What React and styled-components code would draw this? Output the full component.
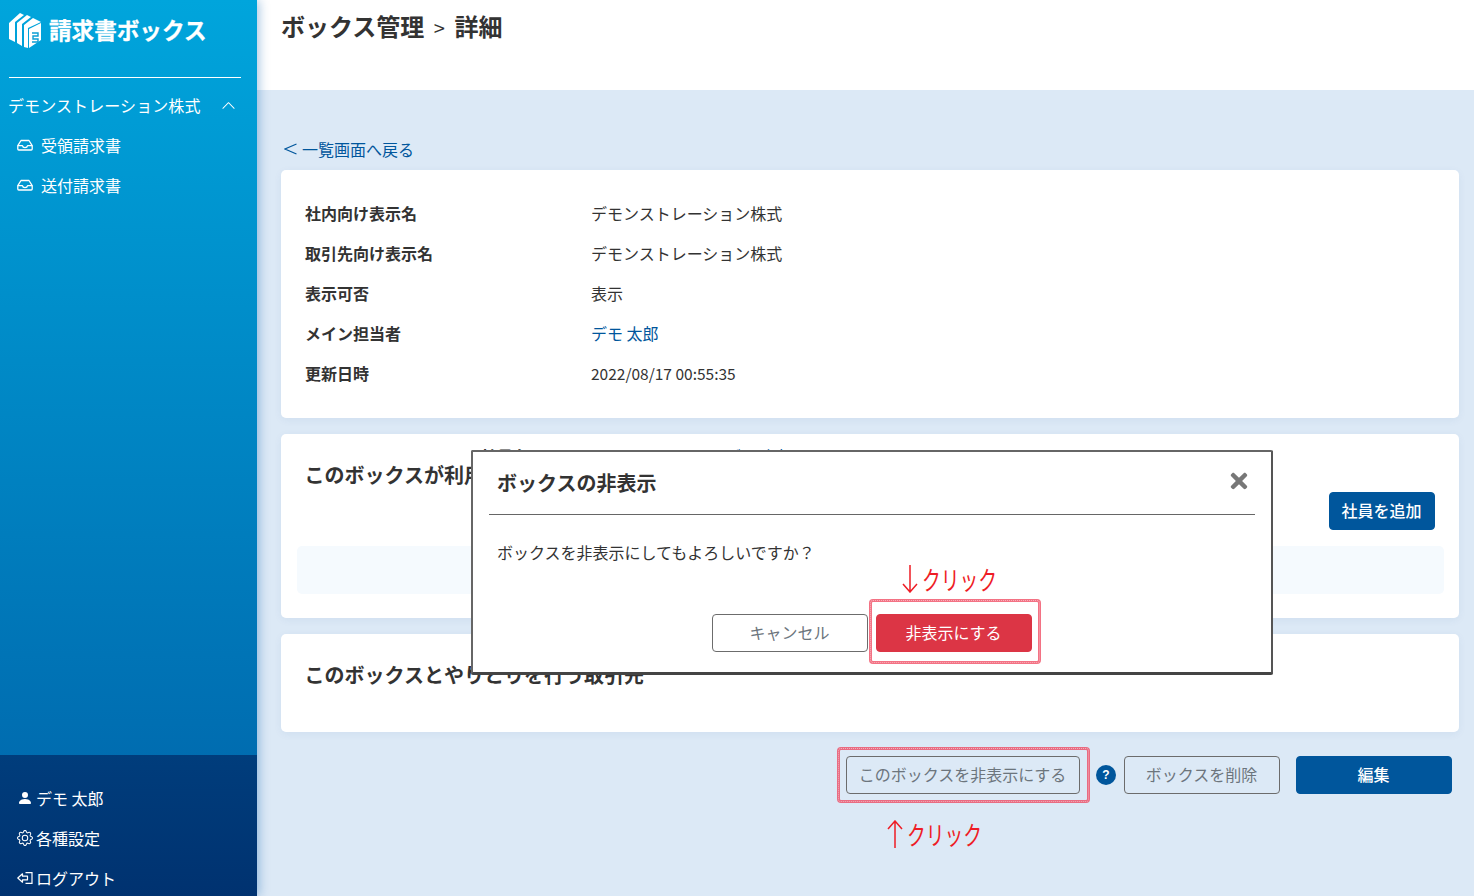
import React from 'react';
import styled, { createGlobalStyle } from 'styled-components';
import { BsPersonFill, BsGear, BsChevronUp } from 'react-icons/bs';
import { FaTimes } from 'react-icons/fa';

const Global = createGlobalStyle`
  html, body { margin: 0; padding: 0; height: 100%; overflow: hidden; }
  body { font-family: "Noto Sans CJK JP", "Noto Sans", sans-serif; font-size: 16px; color: #333; }
  * { box-sizing: border-box; }
`;

const Page = styled.div`
  position: relative;
  display: flex;
  width: 100%;
  height: 896px;
  overflow: hidden;
  background: #dce9f6;
`;

const Sidebar = styled.aside`
  position: relative;
  z-index: 2;
  flex: 0 0 257px;
  display: flex;
  flex-direction: column;
  justify-content: space-between;
  background: linear-gradient(180deg, #00a5dc 0%, #0062a8 100%);
  box-shadow: 2px 0 10px rgba(0, 90, 170, 0.35);
  color: #fff;
`;

const SideTop = styled.div`
  display: flex;
  flex-direction: column;
`;

const Brand = styled.div`
  height: 78px;
  margin: 0 16px 0 9px;
  padding-top: 13px;
  display: flex;
  align-items: flex-start;
  gap: 7px;
  border-bottom: 1px solid #fff;
`;

const BrandName = styled.span`
  font-size: 22.6px;
  font-weight: 700;
  line-height: 34px;
  -webkit-text-stroke: 0.3px #fff;
`;

const CompanyRow = styled.div`
  height: 40px;
  margin-top: 7px;
  padding: 0 21px 0 8px;
  display: flex;
  align-items: center;
  justify-content: space-between;
  letter-spacing: 0.1px;
`;

const SideItem = styled.div`
  height: 40px;
  padding-left: 17px;
  display: flex;
  align-items: center;
  gap: ${(p) => (p.$bottom ? '3px' : '8px')};
  white-space: nowrap;
`;

const SideBottom = styled.div`
  flex: 0 0 141px;
  padding-top: 23px;
  overflow: hidden;
  background: linear-gradient(180deg, #003d7c 0%, #003270 100%);
`;

const Main = styled.main`
  flex: 1;
  display: flex;
  flex-direction: column;
  min-width: 0;
`;

const Header = styled.header`
  height: 90px;
  flex: none;
  background: #fff;
  padding: 8px 24px 0;
`;

const Title = styled.h1`
  margin: 0;
  font-size: 24px;
  font-weight: 700;
  line-height: 36px;
  color: #333;
  white-space: nowrap;
`;

const Sep = styled.span`
  margin: 0 9.5px;
  font-size: 20px;
  font-weight: 400;
`;

const Content = styled.div`
  padding: 47px 15px 0 24px;
  display: flex;
  flex-direction: column;
`;

const BackLink = styled.a`
  height: 24px;
  line-height: 24px;
  margin-bottom: 9px;
  padding-left: 3px;
  color: #00569c;
  display: flex;
  align-items: center;
  gap: 4px;
`;

const Card = styled.section`
  position: relative;
  background: #fff;
  border-radius: 5px;
  margin-bottom: 16px;
  box-shadow: 0 2px 8px rgba(0, 60, 130, 0.06);
`;

const InfoCard = styled(Card)`
  padding: 24px;
`;

const InfoRow = styled.div`
  height: 40px;
  padding-bottom: 2px;
  display: grid;
  grid-template-columns: 286px 1fr;
  align-items: center;
`;

const Label = styled.div`
  font-weight: 700;
`;

const Value = styled.div`
  color: ${(p) => (p.$link ? '#00569c' : '#333')};
  font-size: ${(p) => (p.$small ? '15.5px' : '16px')};
`;

const SectionTitle = styled.h2`
  margin: 0;
  padding: 28px 24px 0;
  font-size: 20px;
  line-height: 26px;
  font-weight: 700;
  color: #333;
  white-space: nowrap;
  text-indent: -0.5px;
`;

const PeekRow = styled.div`
  position: absolute;
  top: 10px;
  left: 200px;
  display: grid;
  grid-template-columns: 244px 1fr;
  line-height: 24px;
  font-weight: 700;
`;

const PeekValue = styled.span`
  color: #00569c;
  font-weight: 400;
`;

const MemberCard = styled(Card)`
  height: 184px;
  display: flex;
  flex-direction: column;
`;

const AddRow = styled.div`
  display: flex;
  justify-content: flex-end;
  padding: 4px 24px 0;
`;

const Button = styled.button`
  height: 38px;
  width: ${(p) => p.$w || '156px'};
  padding: 0 1px 2px 0;
  flex: none;
  border-radius: 4px;
  font: inherit;
  font-weight: ${(p) => (p.$bold ? 500 : 400)};
  border: 1px solid ${(p) => (p.$kind === 'outline' ? '#6c6c6c' : p.$kind === 'danger' ? '#dc3545' : '#00569c')};
  background: ${(p) => (p.$kind === 'outline' ? 'transparent' : p.$kind === 'danger' ? '#dc3545' : '#00569c')};
  color: ${(p) => (p.$kind === 'outline' ? '#6c757d' : '#fff')};
`;

const EmptyPanel = styled.div`
  height: 48px;
  margin: 16px 15px 0 16px;
  background: #f5fafe;
  border-radius: 5px;
`;

const PartnerCard = styled(Card)`
  height: 98px;
`;

const Actions = styled.div`
  margin-top: 8px;
  padding-right: 7px;
  display: flex;
  align-items: center;
  justify-content: flex-end;
`;

const Help = styled.span`
  width: 20px;
  height: 20px;
  margin: 0 8px 0 16px;
  border-radius: 50%;
  background: #00569c;
  color: #fff;
  font-family: "Liberation Sans", sans-serif;
  font-size: 12px;
  font-weight: 700;
  display: flex;
  align-items: center;
  justify-content: center;
`;

const ActionGap = styled.span`
  width: 16px;
  flex: none;
`;

const Modal = styled.div`
  position: absolute;
  z-index: 3;
  left: 471px;
  top: 450px;
  width: 802px;
  height: 225px;
  padding: 0 16px;
  background: #fff;
  border-style: solid;
  border-color: #666 #555 #444 #666;
  border-width: 2px 2px 3px 2px;
  border-radius: 2px;
  display: flex;
  flex-direction: column;
`;

const ModalHead = styled.div`
  height: 63px;
  flex: none;
  padding: 15px 8px 0;
  display: flex;
  justify-content: space-between;
  border-bottom: 1px solid #666;
`;

const ModalTitle = styled.div`
  font-size: 20px;
  font-weight: 700;
  line-height: 32px;
  color: #333;
`;

const Close = styled.span`
  color: #777;
  font-size: 24px;
  height: 28px;
  display: flex;
  align-items: center;
  position: relative;
  left: 4px;
`;

const ModalBody = styled.div`
  padding: 25px 8px 0;
  line-height: 24px;
  color: #333;
`;

const ModalFoot = styled.div`
  margin-top: 50px;
  display: flex;
  justify-content: center;
  gap: 8px;
`;

const Highlight = styled.div`
  position: absolute;
  z-index: 4;
  left: ${(p) => p.$x}px;
  top: ${(p) => p.$y}px;
  width: ${(p) => p.$w}px;
  height: ${(p) => p.$h}px;
  border: 3px solid rgba(238, 60, 85, 0.72);
  border-radius: 4px;
  pointer-events: none;
  &::after {
    content: '';
    position: absolute;
    inset: -2px;
    border: 1px dotted rgba(255, 255, 255, 0.45);
    border-radius: 3px;
  }
`;

const Note = styled.div`
  position: absolute;
  z-index: 4;
  left: ${(p) => p.$x}px;
  top: ${(p) => p.$y}px;
  display: flex;
  align-items: center;
  gap: 3px;
  color: #ee1c25;
  white-space: nowrap;
`;

const NoteText = styled.span`
  display: inline-block;
  font-size: 26px;
  line-height: 34px;
  font-weight: 400;
  transform: scaleX(0.72);
  transform-origin: left center;
`;

const Logo = () => (
  <svg width="33" height="36" viewBox="0 0 33 36" fill="#fff" style={{ flex: 'none' }}>
    <polygon points="0,10 11,0 15,2 6,9 6,29 0,26" />
    <polygon points="8,10 18,2 22,4 13,11 13,33 8,30" />
    <polygon points="15,12 24,5 32,9 19,15 19,35 15,34" />
    <polygon points="20,16 32,10 32,27 20,35" />
    <path d="M23 20 h6 v3 h-5 v3 h5 v3 h-6" fill="none" stroke="#0a9dd3" strokeWidth="1.4" />
  </svg>
);

const InboxIcon = () => (
  <svg width="16" height="16" viewBox="0 0 16 16" fill="none" stroke="currentColor" strokeWidth="1.3" strokeLinejoin="round" style={{ flex: 'none' }}>
    <path d="M4 3.5 H12 L15.2 8.6 V12 Q15.2 13 14.2 13 H1.8 Q0.8 13 0.8 12 V8.6 Z" />
    <path d="M0.8 8.6 H5.4 Q5.8 10.6 8 10.6 Q10.2 10.6 10.6 8.6 H15.2" />
  </svg>
);

const LogoutIcon = () => (
  <svg width="16" height="16" viewBox="0 0 16 16" fill="none" stroke="currentColor" strokeWidth="1.2" style={{ flex: 'none' }}>
    <path d="M0.8 8 L5.5 3.8 V6.2 H10.5 V9.8 H5.5 V12.2 Z" strokeLinejoin="round" />
    <path d="M8.5 2.6 H15 V13.4 H8.5" />
  </svg>
);

const BackChevron = () => (
  <svg width="14" height="14" viewBox="0 0 14 14" fill="none" stroke="currentColor" strokeWidth="1.1" style={{ flex: 'none' }}>
    <path d="M12.5 2 L1 7 L12.5 12" />
  </svg>
);

const ArrowDown = () => (
  <svg width="18" height="28" viewBox="0 0 18 28" fill="none" stroke="#ee1c25" strokeWidth="1.5">
    <path d="M9 0 V27 M2 19 L9 27 L16 19" />
  </svg>
);

const ArrowUp = () => (
  <svg width="18" height="28" viewBox="0 0 18 28" fill="none" stroke="#ee1c25" strokeWidth="1.5">
    <path d="M9 28 V1 M2 9 L9 1 L16 9" />
  </svg>
);

const info = [
  { label: '社内向け表示名', value: 'デモンストレーション株式' },
  { label: '取引先向け表示名', value: 'デモンストレーション株式' },
  { label: '表示可否', value: '表示' },
  { label: 'メイン担当者', value: 'デモ 太郎', link: true },
  { label: '更新日時', value: '2022/08/17 00:55:35', small: true },
];

export default function App() {
  return (
    <>
      <Global />
      <Page>
        <Sidebar>
          <SideTop>
            <Brand>
              <Logo />
              <BrandName>請求書ボックス</BrandName>
            </Brand>
            <CompanyRow>
              <span>デモンストレーション株式</span>
              <BsChevronUp size={15} />
            </CompanyRow>
            <SideItem><InboxIcon />受領請求書</SideItem>
            <SideItem><InboxIcon />送付請求書</SideItem>
          </SideTop>
          <SideBottom>
            <SideItem $bottom><BsPersonFill size={16} />デモ 太郎</SideItem>
            <SideItem $bottom><BsGear size={16} />各種設定</SideItem>
            <SideItem $bottom><LogoutIcon />ログアウト</SideItem>
          </SideBottom>
        </Sidebar>
        <Main>
          <Header>
            <Title>ボックス管理<Sep>&gt;</Sep>詳細</Title>
          </Header>
          <Content>
            <BackLink><BackChevron />一覧画面へ戻る</BackLink>
            <InfoCard>
              {info.map((row) => (
                <InfoRow key={row.label}>
                  <Label>{row.label}</Label>
                  <Value $link={row.link} $small={row.small}>{row.value}</Value>
                </InfoRow>
              ))}
            </InfoCard>
            <MemberCard>
              <PeekRow>
                <span>社員名</span>
                <PeekValue>デモ 太郎</PeekValue>
              </PeekRow>
              <SectionTitle>このボックスが利用できる社員</SectionTitle>
              <AddRow><Button $w="106px" $bold>社員を追加</Button></AddRow>
              <EmptyPanel />
            </MemberCard>
            <PartnerCard>
              <SectionTitle>このボックスとやりとりを行う取引先</SectionTitle>
            </PartnerCard>
            <Actions>
              <Button $kind="outline" $w="234px">このボックスを非表示にする</Button>
              <Help>?</Help>
              <Button $kind="outline">ボックスを削除</Button>
              <ActionGap />
              <Button $bold>編集</Button>
            </Actions>
          </Content>
        </Main>
        <Modal>
          <ModalHead>
            <ModalTitle>ボックスの非表示</ModalTitle>
            <Close><FaTimes /></Close>
          </ModalHead>
          <ModalBody>ボックスを非表示にしてもよろしいですか？</ModalBody>
          <ModalFoot>
            <Button $kind="outline">キャンセル</Button>
            <Button $kind="danger">非表示にする</Button>
          </ModalFoot>
        </Modal>
        <Note $x={901} $y={562}><ArrowDown /><NoteText>クリック</NoteText></Note>
        <Highlight $x={869} $y={599} $w={172} $h={65} />
        <Highlight $x={837} $y={747} $w={253} $h={56} />
        <Note $x={886} $y={817}><ArrowUp /><NoteText>クリック</NoteText></Note>
      </Page>
    </>
  );
}
